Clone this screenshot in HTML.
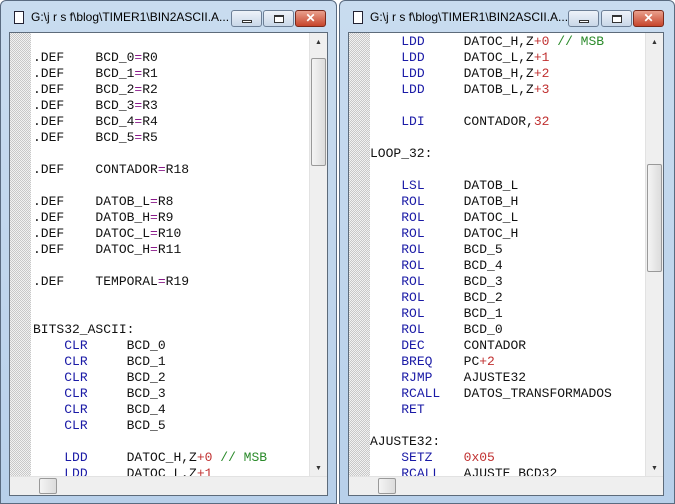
<!DOCTYPE html><html><head><style>
*{margin:0;padding:0;box-sizing:border-box}
body{width:675px;height:504px;background:#fff;position:relative;overflow:hidden;font-family:"Liberation Sans",sans-serif}
.win{position:absolute;top:0;height:504px;background:linear-gradient(#c9dcef,#b8d0ea);border:1px solid #5a6b80;border-radius:6px 6px 0 0}
.title{position:absolute;top:9px;left:30px;font-size:12px;color:#000}
.ico{position:absolute;top:10px;left:13px;width:10px;height:13px;border:1px solid #223;background:#fff}
.btn{position:absolute;top:9px;height:17px;border:1px solid #6d7f96;border-radius:3px;background:linear-gradient(#eef3f9,#c9d7e8)}
.btn i{position:absolute;display:block;border:1px solid #333;background:#fff}
.close{background:linear-gradient(#e9a08d,#c7452b);border-color:#7a2a1c;color:#fff;font-weight:bold;font-size:12px;text-align:center;line-height:15px}
.client{position:absolute;top:31px;left:8px;bottom:7px;border:1px solid #5d6b7a;background:#fff;overflow:hidden}
.gut{position:absolute;left:0;top:0;width:21px;bottom:19px;background:repeating-conic-gradient(#c8c8c8 0 25%,#f2f2f2 0 50%) 0 0/2px 2px}
.vs{position:absolute;right:0;top:0;width:18px;bottom:19px;background:#efefef;border-left:1px solid #e2e2e2}
.thumb{position:absolute;left:1px;width:15px;border:1px solid #999;border-radius:2px;background:linear-gradient(90deg,#f4f4f4,#dcdcdc)}
.hs{position:absolute;left:0;right:0;bottom:0;height:19px;background:#efefef;border-top:1px solid #e2e2e2}
pre{position:absolute;top:1px;font-family:"Liberation Mono",monospace;font-size:13px;line-height:16px;color:#111}
.k{color:#1a1aa6}.n{color:#c03030}.c{color:#2a8a2a}.p{color:#8a1a8a}
</style></head><body>
<div class="win" style="left:0;width:337px">
<div class="ico"></div><div class="title">G:\j r s f\blog\TIMER1\BIN2ASCII.A...</div>
<div class="btn" style="left:230px;width:31px"><i style="left:10px;top:9px;width:10px;height:3px"></i></div>
<div class="btn" style="left:262px;width:31px"><i style="left:10px;top:4px;width:10px;height:8px;border-top-width:2px"></i></div>
<div class="btn close" style="left:294px;width:31px">✕</div>
<div class="client" style="right:8px">
<div class="gut"></div>
<pre style="left:23px">

.DEF    BCD_0<span class="p">=</span>R0
.DEF    BCD_1<span class="p">=</span>R1
.DEF    BCD_2<span class="p">=</span>R2
.DEF    BCD_3<span class="p">=</span>R3
.DEF    BCD_4<span class="p">=</span>R4
.DEF    BCD_5<span class="p">=</span>R5

.DEF    CONTADOR<span class="p">=</span>R18

.DEF    DATOB_L<span class="p">=</span>R8
.DEF    DATOB_H<span class="p">=</span>R9
.DEF    DATOC_L<span class="p">=</span>R10
.DEF    DATOC_H<span class="p">=</span>R11

.DEF    TEMPORAL<span class="p">=</span>R19


BITS32_ASCII:
    <span class="k">CLR</span>     BCD_0
    <span class="k">CLR</span>     BCD_1
    <span class="k">CLR</span>     BCD_2
    <span class="k">CLR</span>     BCD_3
    <span class="k">CLR</span>     BCD_4
    <span class="k">CLR</span>     BCD_5

    <span class="k">LDD</span>     DATOC_H,Z<span class="n">+0</span> <span class="c">// MSB</span>
    <span class="k">LDD</span>     DATOC_L,Z<span class="n">+1</span>
</pre>
<div class="vs"><div class="thumb" style="top:25px;height:108px"></div><div style="position:absolute;top:6px;left:5px;font-size:7px;color:#333">▲</div><div style="position:absolute;bottom:4px;left:5px;font-size:7px;color:#333">▼</div></div>
<div class="hs"><div class="thumb" style="top:1px;left:29px;width:18px;height:16px"></div></div>
</div></div>
<div class="win" style="left:339px;width:336px">
<div class="ico"></div><div class="title">G:\j r s f\blog\TIMER1\BIN2ASCII.A...</div>
<div class="btn" style="left:228px;width:31px"><i style="left:10px;top:9px;width:10px;height:3px"></i></div>
<div class="btn" style="left:261px;width:31px"><i style="left:10px;top:4px;width:10px;height:8px;border-top-width:2px"></i></div>
<div class="btn close" style="left:293px;width:31px">✕</div>
<div class="client" style="right:10px">
<div class="gut"></div>
<pre style="left:21px;top:1px">    <span class="k">LDD</span>     DATOC_H,Z<span class="n">+0</span> <span class="c">// MSB</span>
    <span class="k">LDD</span>     DATOC_L,Z<span class="n">+1</span>
    <span class="k">LDD</span>     DATOB_H,Z<span class="n">+2</span>
    <span class="k">LDD</span>     DATOB_L,Z<span class="n">+3</span>

    <span class="k">LDI</span>     CONTADOR,<span class="n">32</span>

LOOP_32:

    <span class="k">LSL</span>     DATOB_L
    <span class="k">ROL</span>     DATOB_H
    <span class="k">ROL</span>     DATOC_L
    <span class="k">ROL</span>     DATOC_H
    <span class="k">ROL</span>     BCD_5
    <span class="k">ROL</span>     BCD_4
    <span class="k">ROL</span>     BCD_3
    <span class="k">ROL</span>     BCD_2
    <span class="k">ROL</span>     BCD_1
    <span class="k">ROL</span>     BCD_0
    <span class="k">DEC</span>     CONTADOR
    <span class="k">BREQ</span>    PC<span class="n">+2</span>
    <span class="k">RJMP</span>    AJUSTE32
    <span class="k">RCALL</span>   DATOS_TRANSFORMADOS
    <span class="k">RET</span>

AJUSTE32:
    <span class="k">SETZ</span>    <span class="n">0x05</span>
    <span class="k">RCALL</span>   AJUSTE_BCD32
</pre>
<div class="vs"><div class="thumb" style="top:131px;height:108px"></div><div style="position:absolute;top:6px;left:5px;font-size:7px;color:#333">▲</div><div style="position:absolute;bottom:4px;left:5px;font-size:7px;color:#333">▼</div></div>
<div class="hs"><div class="thumb" style="top:1px;left:29px;width:18px;height:16px"></div></div>
</div></div>
</body></html>
